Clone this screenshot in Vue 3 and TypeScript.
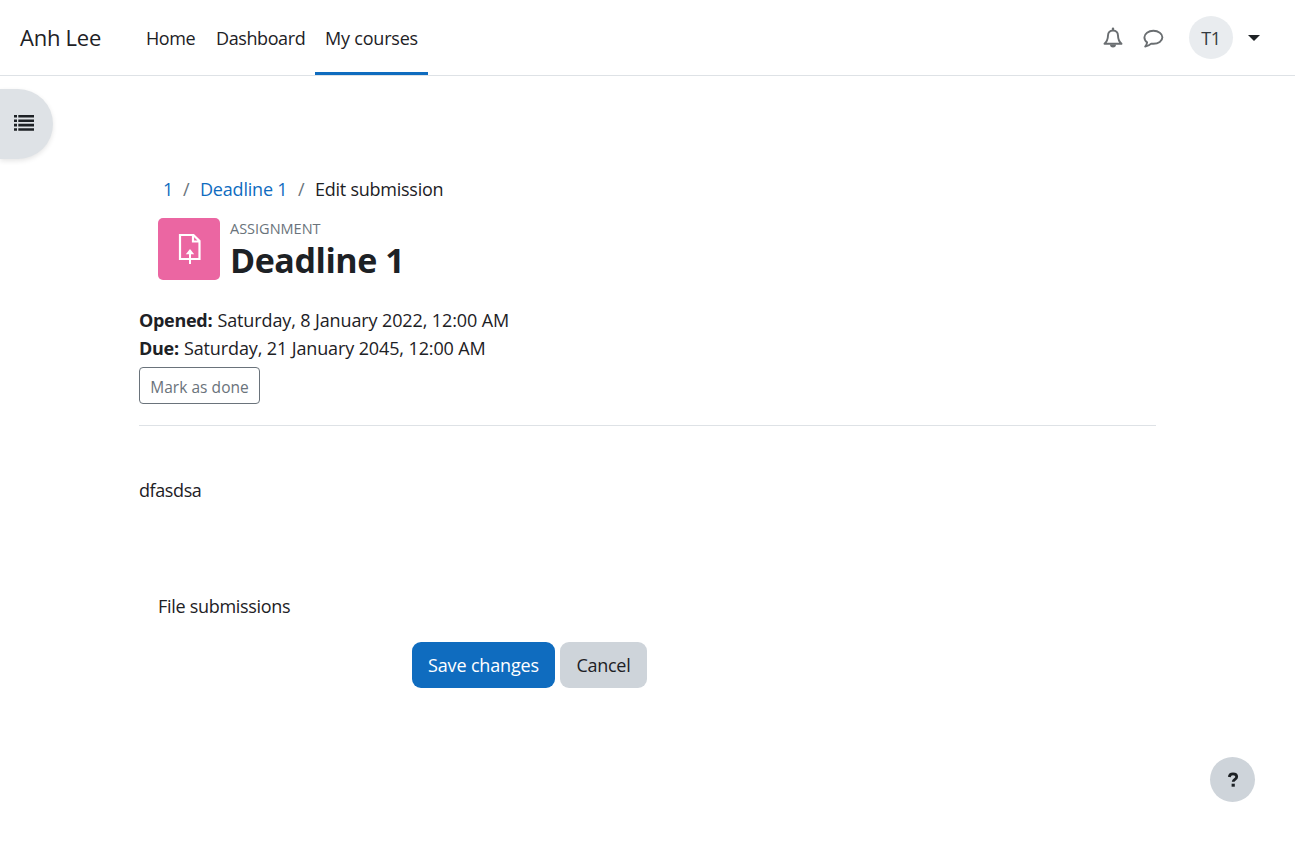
<script setup lang="ts">
interface NavItem {
  label: string
  key: string
  active: boolean
}

const navItems: NavItem[] = [
  { label: 'Home', key: 'home', active: false },
  { label: 'Dashboard', key: 'dashboard', active: false },
  { label: 'My courses', key: 'courses', active: true },
]
</script>

<template>
  <div class="page">
    <header class="navbar">
      <a class="brand">Anh Lee</a>
      <nav class="nav">
        <a v-for="item in navItems" :key="item.key" class="nav-link" :class="[item.key, { active: item.active }]">
          <span>{{ item.label }}</span>
        </a>
      </nav>
      <div class="tools">
        <svg class="bell" viewBox="0 0 20 21" width="20" height="21">
          <path d="M1.500 16.800C4 14.600 4.900 12.400 5 8.600C5.100 5.400 6.900 3.600 10 3.600S14.900 5.400 15 8.600C15.100 12.400 16 14.600 18.500 16.800Z" fill="none" stroke="#6a6e71" stroke-width="1.9" stroke-linejoin="round" />
          <path d="M8.800 1.600a1.200 1.200 0 0 1 2.400 0v2H8.800zM7 17.500h6a3 3 0 0 1-6 0z" fill="#6a6e71" />
        </svg>
        <svg class="chat" viewBox="0 0 22 20" width="22" height="20">
          <path d="M11.400 1.800c5 0 9 2.800 9 6.500s-4 6.500-9 6.500c-.8 0-1.500-.1-2.200-.2c-1.700 1.600-3.700 2.600-6 3c1-1.200 1.700-2.400 1.900-4.200c-1.700-1.200-2.700-3-2.700-5.100c0-3.700 4-6.500 9-6.500z" fill="none" stroke="#6a6e71" stroke-width="1.9" stroke-linejoin="round" />
        </svg>
        <span class="avatar">T1</span>
        <span class="caret"></span>
      </div>
    </header>

    <button class="drawer-toggle" aria-label="Open course index">
      <svg viewBox="0 0 20 16" width="20" height="16" fill="#1d2125">
        <path d="M0 0h3v2.600H0zM0 4.400h3V7H0zM0 8.800h3v2.600H0zM0 13.200h3v2.600H0zM4.300 0H20v2.600H4.300zM4.300 4.400H20V7H4.300zM4.300 8.800H20v2.600H4.300zM4.300 13.200H20v2.600H4.300z" />
      </svg>
    </button>

    <main class="main">
      <div class="breadcrumb">
        <a class="crumb-course">1</a>
        <span class="sep">/</span>
        <a class="crumb-activity">Deadline 1</a>
        <span class="sep">/</span>
        <span class="crumb-current">Edit submission</span>
      </div>

      <div class="activity">
        <div class="activity-icon">
          <svg viewBox="0 0 24 32" width="24" height="32">
            <path d="M2 2h13.500L21.500 8v18H2zM15 2v6.500h6.500" fill="none" stroke="#fff" stroke-width="2.200" />
            <path d="M12 31V20" fill="none" stroke="#fff" stroke-width="2" />
            <path d="M7.800 21.200L12 16l4.200 5.200z" fill="#fff" />
          </svg>
        </div>
        <div class="activity-text">
          <div class="activity-type">ASSIGNMENT</div>
          <h1>Deadline 1</h1>
        </div>
      </div>

      <section class="dates">
        <div><strong>Opened:</strong> <span class="date">Saturday, 8 January 2022, 12:00 AM</span></div>
        <div><strong>Due:</strong> <span class="date">Saturday, 21 January 2045, 12:00 AM</span></div>
      </section>
      <button class="mark">Mark as done</button>
      <hr />
      <p class="intro">dfasdsa</p>
      <div class="form-label">File submissions</div>
      <div class="actions">
        <button class="save">Save changes</button>
        <button class="cancel">Cancel</button>
      </div>
    </main>

    <button class="help" aria-label="Help">
      <svg viewBox="0 0 12 16" width="12" height="16">
        <path d="M2.300 5C2.500 2.900 3.900 1.900 6 1.900s3.700 1 3.700 2.900c0 2.600-3.500 2.500-3.500 5" fill="none" stroke="#1d2125" stroke-width="2.800" />
        <path d="M4.600 11.700h3.200v3H4.600z" fill="#1d2125" />
      </svg>
    </button>
  </div>
</template>

<style>
body {
  margin: 0;
  background: #fff;
}
</style>

<style scoped>
.page {
  position: relative;
  box-sizing: border-box;
  width: 100%;
  height: 842px;
  overflow: hidden;
  color: #1d2125;
  font-family: "Open Sans", "Noto Sans", sans-serif;
  font-size: 18px;
  line-height: 28px;
  letter-spacing: -0.3px;
  white-space: nowrap;
}
button {
  padding: 0;
  border: 0;
  font: inherit;
  color: inherit;
  letter-spacing: inherit;
}
.navbar {
  display: flex;
  box-sizing: border-box;
  height: 76px;
  padding-left: 20px;
  border-bottom: 1px solid #dee2e6;
}
.brand {
  width: 116px;
  line-height: 74px;
  font-size: 22px;
  letter-spacing: -0.25px;
}
.nav {
  display: flex;
}
.nav-link {
  box-sizing: border-box;
  padding-left: 10px;
  line-height: 76px;
  height: 75px;
}
.nav-link.home { width: 70px; letter-spacing: -0.4px; }
.nav-link.dashboard { width: 109px; letter-spacing: -0.4px; }
.nav-link.courses { width: 113px; letter-spacing: -0.2px; }
.nav-link.active {
  border-bottom: 3px solid #0f6cbf;
}
.tools {
  display: flex;
  align-items: center;
  margin-left: auto;
  height: 75px;
}
.bell { margin-right: 19px; }
.chat { margin: 3px 25px 0 0; }
.avatar {
  width: 44px;
  height: 43px;
  border-radius: 50%;
  background: #e9ecef;
  color: #343a40;
  line-height: 45px;
  text-align: center;
}
.caret {
  margin: 0 35px 0 15px;
  border-top: 6px solid #1d2125;
  border-left: 6px solid transparent;
  border-right: 6px solid transparent;
}
.drawer-toggle {
  display: flex;
  align-items: center;
  box-sizing: border-box;
  width: 53px;
  height: 70px;
  margin-top: 13px;
  padding: 0 0 2px 14px;
  border-radius: 0 35px 35px 0;
  background: #dee2e6;
  box-shadow: 0 2px 5px rgba(0, 0, 0, 0.1);
}
.main {
  width: 1017px;
  margin: 16px 0 0 139px;
}
.breadcrumb {
  display: flex;
  padding-left: 24px;
}
.crumb-course, .crumb-activity { color: #0f6cbf; }
.crumb-course { width: 20px; }
.crumb-activity { width: 98px; letter-spacing: -0.2px; }
.crumb-current { letter-spacing: -0.25px; }
.sep {
  width: 17px;
  color: #6a737b;
}
.activity {
  display: flex;
  margin: 15px 0 0 19px;
  height: 62px;
}
.activity-icon {
  display: flex;
  align-items: center;
  justify-content: center;
  box-sizing: border-box;
  width: 62px;
  height: 62px;
  padding-left: 1px;
  border-radius: 5px;
  background: #eb66a2;
}
.activity-text { margin-left: 10px; }
.activity-type {
  height: 21px;
  line-height: 21px;
  color: #6a737b;
  font-size: 14.500px;
  letter-spacing: 0;
}
h1 {
  margin: 0;
  font-size: 34px;
  line-height: 43px;
  font-weight: 700;
  letter-spacing: -0.45px;
}
.dates { margin-top: 26px; }
.date {
  margin-left: 0.8px;
  letter-spacing: -0.12px;
}
.mark {
  display: block;
  box-sizing: border-box;
  width: 121px;
  height: 37px;
  margin-top: 5px;
  padding-top: 3px;
  border: 1px solid #6a737b;
  border-radius: 4px;
  background: #fff;
  color: #6a737b;
  font-size: 15.500px;
  letter-spacing: 0.05px;
}
hr {
  height: 1px;
  margin: 21px 0 0;
  border: 0;
  background: #dee2e6;
}
.intro { margin: 50px 0 0; letter-spacing: -0.4px; }
.form-label { margin: 88px 0 0 19px; }
.actions {
  display: flex;
  gap: 5px;
  margin: 22px 0 0 273px;
}
.save, .cancel {
  height: 46px;
  border-radius: 9px;
}
.save {
  width: 143px;
  background: #0f6cbf;
  color: #fff;
  letter-spacing: -0.15px;
}
.cancel {
  width: 87px;
  background: #ced4da;
}
.help {
  position: absolute;
  right: 40px;
  bottom: 40px;
  display: flex;
  align-items: center;
  justify-content: center;
  width: 45px;
  height: 45px;
  border-radius: 50%;
  background: #ced4da;
}
</style>
